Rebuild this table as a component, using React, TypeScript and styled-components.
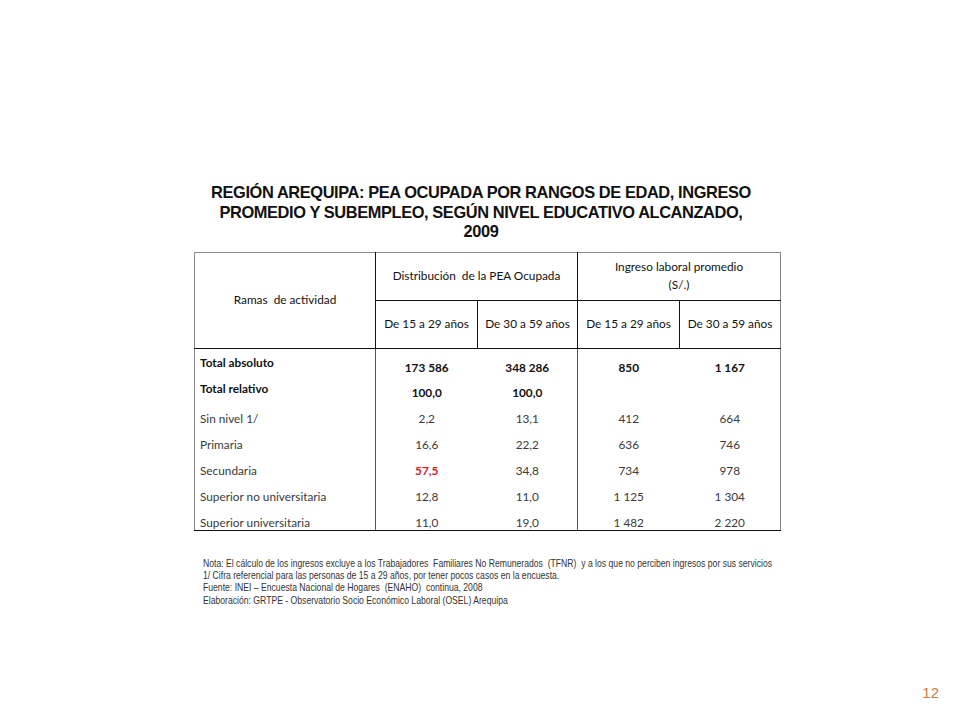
import React from 'react';
import styled, { createGlobalStyle } from 'styled-components';

const GlobalStyle = createGlobalStyle`
  html, body {
    margin: 0;
    padding: 0;
    background: #ffffff;
  }
`;

const Slide = styled.div`
  width: 960px;
  height: 720px;
  display: flex;
  flex-direction: column;
  background: #ffffff;
  box-sizing: border-box;
  padding-top: 183px;
`;

const Title = styled.h1`
  margin: 0;
  font-family: 'Liberation Sans', Arial, sans-serif;
  font-weight: 700;
  font-size: 16.4px;
  line-height: 19.5px;
  letter-spacing: -0.4px;
  color: #111;
  text-align: center;
  padding-left: 2px;
`;

const Table = styled.table`
  margin: 10px 0 0 194px;
  width: 586px;
  border-collapse: collapse;
  table-layout: fixed;
  font-family: Lato, 'Open Sans', sans-serif;
  font-size: 11.8px;
  line-height: 15px;
  color: #222;
`;

const HeadCell = styled.th<{ $h?: number }>`
  font-weight: 400;
  text-align: center;
  vertical-align: middle;
  padding: 0 2px;
  height: ${(p) => p.$h ?? 47}px;
  border: 1px solid #111;
  line-height: 18px;
  color: #111;
  white-space: nowrap;
`;

const OuterFrame = styled.tbody`
  & tr:first-child > * {
    border-top-color: #8a8a8a;
  }
`;

const Row = styled.tr<{ $h: number }>`
  height: ${(p) => p.$h}px;
`;

const LabelCell = styled.td<{ $bold?: boolean; $align?: string; $pt?: number }>`
  padding: ${(p) => p.$pt ?? 0}px 0 0 5px;
  vertical-align: ${(p) => p.$align ?? 'middle'};
  font-weight: ${(p) => (p.$bold ? 700 : 400)};
  color: ${(p) => (p.$bold ? '#111' : '#3a3a3a')};
  border-left: 1px solid #8a8a8a;
  border-right: 1px solid #555;
  white-space: nowrap;
`;

const ValueCell = styled.td<{
  $bold?: boolean;
  $red?: boolean;
  $align?: string;
  $pt?: number;
  $divider?: boolean;
  $edge?: boolean;
}>`
  text-align: center;
  padding: ${(p) => p.$pt ?? 0}px 0 0 0;
  vertical-align: ${(p) => p.$align ?? 'middle'};
  font-weight: ${(p) => (p.$bold || p.$red ? 700 : 400)};
  color: ${(p) => (p.$red ? '#d0202a' : p.$bold ? '#111' : '#3a3a3a')};
  border-right: ${(p) =>
    p.$edge ? '1px solid #8a8a8a' : p.$divider ? '1px solid #555' : 'none'};
`;

const Body = styled.tbody`
  & tr:last-child > * {
    border-bottom: 1px solid #111;
  }
`;

const Notes = styled.div`
  margin: 26px 0 0 203px;
  font-family: 'Liberation Sans', Arial, sans-serif;
  font-size: 11.5px;
  line-height: 12.4px;
  color: #333;
  transform: scaleX(0.75);
  transform-origin: left top;
`;

const NoteLine = styled.div`
  white-space: pre;
`;

const PageNumber = styled.div`
  margin-top: auto;
  align-self: flex-end;
  margin-right: 21px;
  margin-bottom: 19px;
  font-family: 'Liberation Sans', Arial, sans-serif;
  font-size: 15px;
  color: #cc7a3e;
`;

type DataRow = {
  label: string;
  values: string[];
  bold?: boolean;
  h: number;
  labelAlign?: string;
  labelPt?: number;
  valueAlign?: string;
  valuePt?: number;
  red?: number;
};

const rows: DataRow[] = [
  {
    label: 'Total absoluto',
    values: ['173 586', '348 286', '850', '1 167'],
    bold: true,
    h: 32,
    labelAlign: 'top',
    labelPt: 6,
    valueAlign: 'top',
    valuePt: 11,
  },
  {
    label: 'Total relativo',
    values: ['100,0', '100,0', '', ''],
    bold: true,
    h: 25,
    labelAlign: 'top',
    labelPt: 1,
    valueAlign: 'top',
    valuePt: 5,
  },
  { label: 'Sin nivel 1/', values: ['2,2', '13,1', '412', '664'], h: 26 },
  { label: 'Primaria', values: ['16,6', '22,2', '636', '746'], h: 26 },
  { label: 'Secundaria', values: ['57,5', '34,8', '734', '978'], h: 26, red: 0 },
  { label: 'Superior no universitaria', values: ['12,8', '11,0', '1 125', '1 304'], h: 26 },
  {
    label: 'Superior universitaria',
    values: ['11,0', '19,0', '1 482', '2 220'],
    h: 21,
    labelAlign: 'bottom',
    valueAlign: 'bottom',
  },
];

const notes = [
  'Nota: El cálculo de los ingresos excluye a los Trabajadores  Familiares No Remunerados  (TFNR)  y a los que no perciben ingresos por sus servicios',
  '1/ Cifra referencial para las personas de 15 a 29 años, por tener pocos casos en la encuesta.',
  'Fuente: INEI – Encuesta Nacional de Hogares  (ENAHO)  continua, 2008',
  'Elaboración: GRTPE - Observatorio Socio Económico Laboral (OSEL) Arequipa',
];

const App: React.FC = () => {
  return (
    <Slide>
      <GlobalStyle />
      <Title>
        REGIÓN AREQUIPA: PEA OCUPADA POR RANGOS DE EDAD, INGRESO
        <br />
        PROMEDIO Y SUBEMPLEO, SEGÚN NIVEL EDUCATIVO ALCANZADO,
        <br />
        2009
      </Title>

      <Table>
        <colgroup>
          <col style={{ width: 181 }} />
          <col style={{ width: 102 }} />
          <col style={{ width: 100 }} />
          <col style={{ width: 102 }} />
          <col style={{ width: 101 }} />
        </colgroup>
        <OuterFrame>
          <tr>
            <HeadCell rowSpan={2} style={{ borderLeftColor: '#8a8a8a' }}>
              Ramas &nbsp;de actividad
            </HeadCell>
            <HeadCell colSpan={2}>Distribución &nbsp;de la PEA Ocupada</HeadCell>
            <HeadCell colSpan={2} style={{ borderRightColor: '#8a8a8a' }}>
              Ingreso laboral promedio
              <br />
              (S/.)
            </HeadCell>
          </tr>
          <tr>
            <HeadCell>De 15 a 29 años</HeadCell>
            <HeadCell>De 30 a 59 años</HeadCell>
            <HeadCell>De 15 a 29 años</HeadCell>
            <HeadCell style={{ borderRightColor: '#8a8a8a' }}>De 30 a 59 años</HeadCell>
          </tr>
        </OuterFrame>
        <Body>
          {rows.map((r) => (
            <Row key={r.label} $h={r.h}>
              <LabelCell $bold={r.bold} $align={r.labelAlign} $pt={r.labelPt}>
                {r.label}
              </LabelCell>
              {r.values.map((v, i) => (
                <ValueCell
                  key={i}
                  $bold={r.bold}
                  $red={r.red === i}
                  $align={r.valueAlign}
                  $pt={r.valuePt}
                  $divider={i === 1}
                  $edge={i === 3}
                >
                  {v}
                </ValueCell>
              ))}
            </Row>
          ))}
        </Body>
      </Table>

      <Notes>
        {notes.map((n) => (
          <NoteLine key={n}>{n}</NoteLine>
        ))}
      </Notes>

      <PageNumber>12</PageNumber>
    </Slide>
  );
};

export default App;
